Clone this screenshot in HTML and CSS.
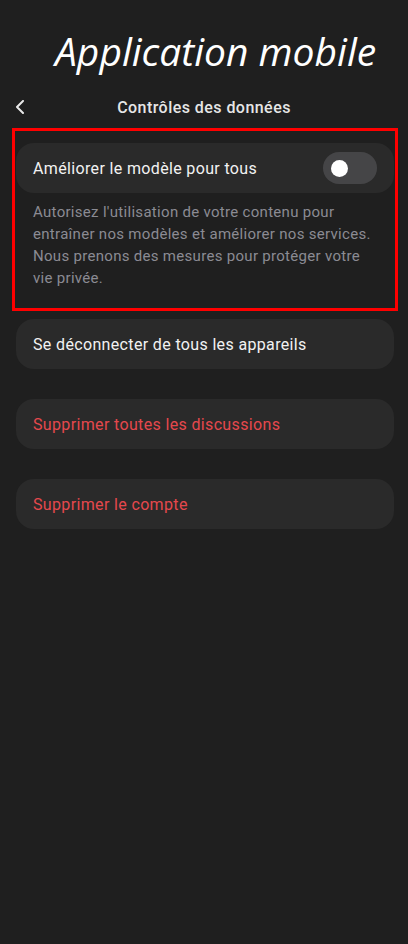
FILE: index.html
```html
<!DOCTYPE html>
<html lang="fr">
<head>
<meta charset="UTF-8">
<meta name="viewport" content="width=device-width, initial-scale=1.0">
<title>Contrôles des données</title>
<link rel="stylesheet" href="styles.css">
</head>
<body>

<h1 class="banner">Application mobile</h1>

<div class="topbar">
  <span class="back">
    <svg width="10" height="14" viewBox="0 0 10 14"><path d="M8 1 L2 7 L8 13" fill="none" stroke="#e8e8e8" stroke-width="2" stroke-linecap="round" stroke-linejoin="round"/></svg>
  </span>
  <span class="title">Contrôles des données</span>
</div>

<div class="highlight">
  <div class="card card-toggle">
    <span>Améliorer le modèle pour tous</span>
    <span class="switch"><span class="knob"></span></span>
  </div>
  <p class="hint">Autorisez l'utilisation de votre contenu pour entraîner nos modèles et améliorer nos services. Nous prenons des mesures pour protéger votre vie privée.</p>
</div>

<div class="list">
  <div class="card">Se déconnecter de tous les appareils</div>
  <div class="card danger">Supprimer toutes les discussions</div>
  <div class="card danger">Supprimer le compte</div>
</div>

</body>
</html>
```

FILE: styles.css
```css
body {
  margin: 0;
  background-color: #1f1f1f;
  color: #f2f2f2;
  font-family: Roboto, "Noto Sans", sans-serif;
  height: 944px;
}

.banner {
  margin: 0;
  padding: 24px 0 0 55px;
  height: 60px;
  font-family: "Open Sans", sans-serif;
  font-style: italic;
  font-weight: 400;
  font-size: 39px;
  line-height: 54px;
  color: #fff;
}

.topbar {
  position: relative;
  display: flex;
  justify-content: center;
  align-items: center;
  height: 22px;
  margin-top: 12px;
}

.back {
  position: absolute;
  left: 15px;
  top: 4px;
  display: flex;
}

.title {
  font-size: 16px;
  font-weight: 500;
  letter-spacing: 0.45px;
  color: #e6e6e6;
}

.highlight {
  margin: 10px 10px 0 12px;
  padding: 12px 1px 19px;
  border: 3px solid #ff0000;
}

.card {
  display: flex;
  align-items: center;
  height: 50px;
  padding: 0 17px;
  border-radius: 18px;
  background-color: #2a2a2a;
  font-size: 16px;
  letter-spacing: 0.35px;
  color: #f2f2f2;
}

.card-toggle {
  justify-content: space-between;
  padding-right: 17px;
}

.switch {
  display: flex;
  align-items: center;
  width: 54px;
  height: 32px;
  border-radius: 16px;
  background-color: #454547;
}

.knob {
  width: 17px;
  height: 17px;
  margin-left: 8px;
  border-radius: 50%;
  background-color: #fff;
}

.hint {
  margin: 8px 0 0;
  padding: 0 17px;
  font-size: 15px;
  line-height: 22px;
  letter-spacing: 0.3px;
  color: #8b8b93;
}

.list {
  display: flex;
  flex-direction: column;
  gap: 30px;
  margin: 8px 14px 0 16px;
}

.danger {
  color: #e5484d;
}
```
